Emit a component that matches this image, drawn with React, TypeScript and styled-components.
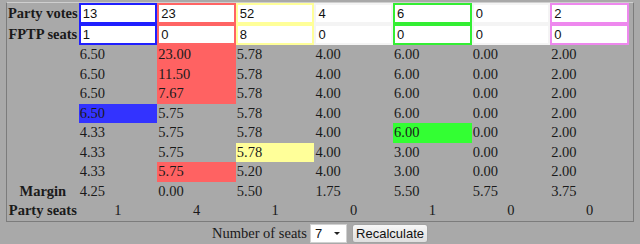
import React, { useState } from "react";
import styled, { createGlobalStyle } from "styled-components";

type Party = { votes: number; fptp: number; color: string };

const parties: Party[] = [
  { votes: 13, fptp: 1, color: "#1f1fff" },
  { votes: 23, fptp: 0, color: "#ff6464" },
  { votes: 52, fptp: 8, color: "#ffff99" },
  { votes: 4, fptp: 0, color: "#f4f4f4" },
  { votes: 6, fptp: 0, color: "#33ee33" },
  { votes: 0, fptp: 0, color: "#f4f4f4" },
  { votes: 2, fptp: 0, color: "#ee88ee" },
];

// each row: values per party, and which column won the seat in that round
const rounds: { values: string[]; winner: number; fill: string }[] = [
  { values: ["6.50", "23.00", "5.78", "4.00", "6.00", "0.00", "2.00"], winner: 1, fill: "#ff6262" },
  { values: ["6.50", "11.50", "5.78", "4.00", "6.00", "0.00", "2.00"], winner: 1, fill: "#ff6262" },
  { values: ["6.50", "7.67", "5.78", "4.00", "6.00", "0.00", "2.00"], winner: 1, fill: "#ff6262" },
  { values: ["6.50", "5.75", "5.78", "4.00", "6.00", "0.00", "2.00"], winner: 0, fill: "#3333ff" },
  { values: ["4.33", "5.75", "5.78", "4.00", "6.00", "0.00", "2.00"], winner: 4, fill: "#33ff33" },
  { values: ["4.33", "5.75", "5.78", "4.00", "3.00", "0.00", "2.00"], winner: 2, fill: "#ffff99" },
  { values: ["4.33", "5.75", "5.20", "4.00", "3.00", "0.00", "2.00"], winner: 1, fill: "#ff6262" },
];

const margins = ["4.25", "0.00", "5.50", "1.75", "5.50", "5.75", "3.75"];
const seats = [1, 4, 1, 0, 1, 0, 0];

const App: React.FC = () => {
  const [numSeats, setNumSeats] = useState("7");

  return (
    <Page>
      <GlobalStyle />
      <Table>
        <colgroup>
          <LabelCol />
          {parties.map((_, i) => (
            <PartyCol key={i} />
          ))}
        </colgroup>
        <tbody>
          <tr>
            <Label>Party votes</Label>
            {parties.map((p, i) => (
              <InputCell key={i}>
                <NumInput $color={p.color} defaultValue={p.votes} />
              </InputCell>
            ))}
          </tr>
          <tr>
            <Label>FPTP seats</Label>
            {parties.map((p, i) => (
              <InputCell key={i}>
                <NumInput $color={p.color} defaultValue={p.fptp} />
              </InputCell>
            ))}
          </tr>
          {rounds.map((r, ri) => (
            <tr key={ri}>
              <Label />
              {r.values.map((v, i) => (
                <Value key={i} $fill={i === r.winner ? r.fill : undefined}>
                  {v}
                </Value>
              ))}
            </tr>
          ))}
          <tr>
            <Label>Margin</Label>
            {margins.map((m, i) => (
              <Value key={i}>{m}</Value>
            ))}
          </tr>
          <tr>
            <Label>Party seats</Label>
            {seats.map((s, i) => (
              <SeatCount key={i}>{s}</SeatCount>
            ))}
          </tr>
        </tbody>
      </Table>
      <Controls>
        <span>Number of seats</span>
        <SelectWrap>
          <Select value={numSeats} onChange={(e) => setNumSeats(e.target.value)}>
            {[1, 2, 3, 4, 5, 6, 7, 8, 9, 10].map((n) => (
              <option key={n} value={n}>
                {n}
              </option>
            ))}
          </Select>
          <Arrow />
        </SelectWrap>
        <Button>Recalculate</Button>
      </Controls>
    </Page>
  );
};

const GlobalStyle = createGlobalStyle`
  html, body {
    margin: 0;
    background: #a9a9a9;
  }
`;

const Page = styled.div`
  width: 640px;
  height: 244px;
  box-sizing: border-box;
  padding: 2px 0 0 6px;
  font-family: "Liberation Serif", "Times New Roman", serif;
  font-size: 14.5px;
  color: #1a1a1a;
`;

const Table = styled.table`
  border-collapse: separate;
  border-spacing: 0;
  table-layout: fixed;
  border: 1px solid #7c7c7c;
  border-top-color: #cfcfcf;
  padding-right: 4px;
`;

const LabelCol = styled.col`
  width: 71px;
`;

const PartyCol = styled.col`
  width: 78.6px;
`;

const Label = styled.th`
  padding: 0 1px;
  font-weight: bold;
  text-align: center;
  white-space: nowrap;
  line-height: 17.5px;
  height: 19.5px;
  box-sizing: border-box;
`;

const InputCell = styled.td`
  padding: 0;
  height: 21px;
`;

const NumInput = styled.input.attrs({ type: "text" })<{ $color: string }>`
  display: block;
  width: 100%;
  height: 21px;
  box-sizing: border-box;
  margin: 0;
  padding: 0 2px;
  border: 2px solid ${(p) => p.$color};
  background: #fff;
  font-family: "Liberation Sans", Arial, sans-serif;
  font-size: 13px;
  color: #111;
  outline: none;
`;

const Value = styled.td<{ $fill?: string }>`
  padding: 1px 1px 1px 1px;
  line-height: 17.5px;
  text-align: left;
  background: ${(p) => p.$fill ?? "transparent"};
`;

const SeatCount = styled.td`
  padding: 1px;
  line-height: 17.5px;
  text-align: center;
`;

const Controls = styled.div`
  display: flex;
  align-items: center;
  justify-content: center;
  gap: 3px;
  width: 628px;
  height: 21px;
  margin-top: 1px;
`;

const SelectWrap = styled.span`
  position: relative;
  display: inline-block;
  width: 37px;
  height: 19px;
  margin-right: 2px;
`;

const Select = styled.select`
  appearance: none;
  width: 100%;
  height: 100%;
  box-sizing: border-box;
  margin: 0;
  padding: 0 0 0 4px;
  border: 1px solid #d0d0d0;
  border-radius: 0;
  background: #fff;
  font-family: "Liberation Sans", Arial, sans-serif;
  font-size: 13px;
  color: #111;
`;

const Arrow = styled.span`
  position: absolute;
  right: 7px;
  top: 8px;
  width: 0;
  height: 0;
  border-left: 3px solid transparent;
  border-right: 3px solid transparent;
  border-top: 3px solid #222;
  pointer-events: none;
`;

const Button = styled.button`
  height: 19px;
  width: 76px;
  box-sizing: border-box;
  padding: 0;
  border: 1px solid #a3a3a3;
  border-radius: 3px;
  background: linear-gradient(#f7f7f7, #dedede);
  font-family: "Liberation Sans", Arial, sans-serif;
  font-size: 13px;
  color: #111;
`;

export default App;
